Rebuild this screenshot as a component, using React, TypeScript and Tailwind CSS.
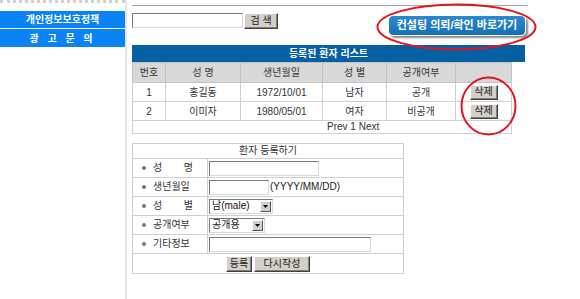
import React from "react";

const patients = [
  { no: 1, name: "홍길동", birth: "1972/10/01", sex: "남자", open: "공개" },
  { no: 2, name: "이미자", birth: "1980/05/01", sex: "여자", open: "비공개" },
];

// old-school windows style button
const WinButton = ({ label, className = "" }: { label: string; className?: string }) => (
  <button
    className={
      "flex items-center justify-center bg-[#d4d0c8] border border-t-white border-l-white border-r-[#404040] border-b-[#404040] shadow-[inset_-1px_-1px_0_#808080] text-[10px] leading-none text-[#222] " +
      className
    }
  >
    {label}
  </button>
);

const FakeSelect = ({ value, width }: { value: string; width: string }) => (
  <div className={"flex h-[15px] items-center border border-t-[#7a7a7a] border-l-[#7a7a7a] border-r-[#d8d8d8] border-b-[#d8d8d8] bg-white pl-[2px] " + width}>
    <span className="text-[10px] leading-none text-[#111]">{value}</span>
    <span className="ml-auto mr-px flex h-[11px] w-[11px] items-center justify-center bg-[#d4d0c8] border border-t-white border-l-white border-r-[#555] border-b-[#555]">
      <svg width="5" height="3" viewBox="0 0 5 3">
        <path d="M0 0h5L2.5 3z" fill="#000" />
      </svg>
    </span>
  </div>
);

const FormRow = ({ label, children }: { label: React.ReactNode; children: React.ReactNode }) => (
  <tr className="h-[19px]">
    <td className="border border-[#cfcfcf] p-0">
      <div className="flex items-center pl-[9px]">
        <span className="h-[4px] w-[4px] rounded-full bg-[#777]" />
        <span className="ml-[7px] text-[10px] leading-none text-[#333]">{label}</span>
      </div>
    </td>
    <td className="border border-[#cfcfcf] p-0 pl-[1px]">{children}</td>
  </tr>
);

const Spread = ({ a, b }: { a: string; b: string }) => (
  <span className="flex w-[40px] justify-between">
    <span>{a}</span>
    <span>{b}</span>
  </span>
);

export default function App() {
  return (
    <div className="flex h-[299px] w-[580px] overflow-hidden bg-white font-['Liberation_Sans','Noto_Sans_CJK_KR',sans-serif]">
      {/* left menu */}
      <aside className="w-[125px] shrink-0 border-t-[3px] border-dotted border-[#cfcfcf] pt-[8px]">
        <div className="flex h-[17px] items-center justify-center bg-[#0a84f4] text-[10px] font-bold text-white">
          개인정보보호정책
        </div>
        <div className="mt-px flex h-[18px] items-center justify-center bg-[#0a84f4] text-[10px] font-bold tracking-[3px] text-white">
          광 고 문 의
        </div>
      </aside>
      <div className="w-[2px] shrink-0 bg-[#e6e6e6]" />

      {/* main */}
      <main className="relative flex-1 pl-[5px] pt-[5px]">
        <div className="h-px w-[396px] bg-[#a8a8a8]" />

        <div className="flex h-[39px] items-start pt-[7px]">
          <div className="h-[15px] w-[111px] border border-t-[#7a7a7a] border-l-[#7a7a7a] border-r-[#d8d8d8] border-b-[#d8d8d8] bg-white" />
          <WinButton label="검 색" className="ml-px h-[16px] w-[34px]" />

          <div className="relative ml-[110px] mt-[2px]">
            <div className="flex h-[21px] w-[138px] items-center justify-center rounded-[5px] border border-white bg-gradient-to-b from-[#2a8ad0] to-[#1570b4] text-[11px] font-bold text-white shadow-[2px_2px_2px_#8a8a8a]">
              컨설팅 의뢰/확인 바로가기
            </div>
            <svg className="absolute left-[-12px] top-[-12px]" width="161" height="48" viewBox="0 0 161 48">
              <ellipse cx="80.5" cy="24" rx="79" ry="22.5" fill="none" stroke="#e3141c" strokeWidth="2" />
            </svg>
          </div>
        </div>

        {/* patient list */}
        <div className="flex h-[17px] w-[393px] items-center justify-center bg-[#0460a2] text-[10px] font-bold text-white">
          등록된 환자 리스트
        </div>
        <table className="w-[379px] table-fixed border-collapse text-[10px] text-[#333]">
          <colgroup>
            <col className="w-[33px]" />
            <col className="w-[75px]" />
            <col className="w-[82px]" />
            <col className="w-[64px]" />
            <col className="w-[69px]" />
            <col className="w-[56px]" />
          </colgroup>
          <thead>
            <tr className="h-[20px] bg-[#d8d8d8]">
              <th className="border border-[#c4c4c4] font-normal">번호</th>
              <th className="border border-[#c4c4c4] font-normal">성 명</th>
              <th className="border border-[#c4c4c4] font-normal">생년월일</th>
              <th className="border border-[#c4c4c4] font-normal">성 별</th>
              <th className="border border-[#c4c4c4] font-normal">공개여부</th>
              <th className="border border-[#c4c4c4] font-normal"></th>
            </tr>
          </thead>
          <tbody>
            {patients.map((p) => (
              <tr key={p.no} className="h-[19px] text-center">
                <td className="border border-[#cfcfcf] p-0">{p.no}</td>
                <td className="border border-[#cfcfcf] p-0">{p.name}</td>
                <td className="border border-[#cfcfcf] p-0">{p.birth}</td>
                <td className="border border-[#cfcfcf] p-0">{p.sex}</td>
                <td className="border border-[#cfcfcf] p-0">{p.open}</td>
                <td className="border border-[#cfcfcf] p-0">
                  <WinButton label="삭제" className="mx-auto h-[15px] w-[28px]" />
                </td>
              </tr>
            ))}
            <tr className="h-[13px]">
              <td colSpan={6} className="border border-[#cfcfcf] p-0 pl-[194px] leading-none">
                Prev 1 Next
              </td>
            </tr>
          </tbody>
        </table>

        <svg className="absolute left-[333px] top-[76px]" width="57" height="60" viewBox="0 0 57 60">
          <ellipse cx="28.5" cy="30" rx="27" ry="28.5" fill="none" stroke="#e3141c" strokeWidth="2" />
        </svg>

        {/* register form */}
        <table className="mt-[9px] w-[271px] table-fixed border-collapse text-[#333]">
          <colgroup>
            <col className="w-[75px]" />
            <col className="w-[196px]" />
          </colgroup>
          <tbody>
            <tr className="h-[15px]">
              <td colSpan={2} className="border border-[#cfcfcf] p-0 text-center text-[10px] leading-none">
                환자 등록하기
              </td>
            </tr>
            <FormRow label={<Spread a="성" b="명" />}>
              <div className="h-[15px] w-[110px] border border-t-[#7a7a7a] border-l-[#7a7a7a] border-r-[#d8d8d8] border-b-[#d8d8d8] bg-white" />
            </FormRow>
            <FormRow label="생년월일">
              <div className="flex items-center">
                <div className="h-[15px] w-[60px] border border-t-[#7a7a7a] border-l-[#7a7a7a] border-r-[#d8d8d8] border-b-[#d8d8d8] bg-white" />
                <span className="ml-px text-[10px] leading-none text-[#222]">(YYYY/MM/DD)</span>
              </div>
            </FormRow>
            <FormRow label={<Spread a="성" b="별" />}>
              <FakeSelect value="남(male)" width="w-[64px]" />
            </FormRow>
            <FormRow label="공개여부">
              <FakeSelect value="공개용" width="w-[56px]" />
            </FormRow>
            <FormRow label="기타정보">
              <div className="h-[15px] w-[162px] border border-t-[#7a7a7a] border-l-[#7a7a7a] border-r-[#d8d8d8] border-b-[#d8d8d8] bg-white" />
            </FormRow>
            <tr className="h-[20px]">
              <td colSpan={2} className="border border-[#cfcfcf] p-0">
                <div className="flex justify-center gap-[2px]">
                  <WinButton label="등록" className="h-[16px] w-[26px]" />
                  <WinButton label="다시작성" className="h-[16px] w-[56px]" />
                </div>
              </td>
            </tr>
          </tbody>
        </table>
      </main>
    </div>
  );
}
